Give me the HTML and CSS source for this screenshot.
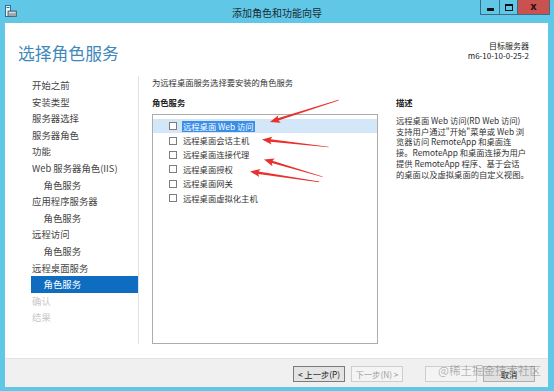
FILE: index.html
```html
<!DOCTYPE html>
<html lang="zh-CN">
<head>
<meta charset="utf-8">
<title>添加角色和功能向导</title>
<link rel="stylesheet" href="styles.css">
</head>
<body>
<div class="window">
  <div class="titlebar">
    <svg class="app-icon" width="12" height="12" viewBox="0 0 12 12">
      <rect x="0.5" y="0.5" width="5" height="11" fill="#e8f4fb" stroke="#2d6fa3"/>
      <rect x="1.5" y="2" width="3" height="1" fill="#2d6fa3"/>
      <rect x="3" y="6" width="8.5" height="5.5" fill="#9aa7b0" stroke="#4d5a63" stroke-width="0.8"/>
      <rect x="4" y="7.2" width="6.5" height="1" fill="#e3e8eb"/>
    </svg>
    <div class="title">添加角色和功能向导</div>
    <div class="controls">
      <div class="ctl ctl-min"><span class="min-bar"></span></div>
      <div class="ctl ctl-max"><span class="max-box"></span></div>
      <div class="ctl ctl-close">x</div>
    </div>
  </div>

  <div class="client">
    <div class="header">
      <h1 class="heading">选择角色服务</h1>
      <div class="target">
        <div class="target-label">目标服务器</div>
        <div class="target-name">m6-10-10-0-25-2</div>
      </div>
    </div>

    <div class="main">
      <nav class="nav">
        <div class="nav-item">开始之前</div>
        <div class="nav-item">安装类型</div>
        <div class="nav-item">服务器选择</div>
        <div class="nav-item">服务器角色</div>
        <div class="nav-item">功能</div>
        <div class="nav-item">Web 服务器角色(IIS)</div>
        <div class="nav-item sub">角色服务</div>
        <div class="nav-item">应用程序服务器</div>
        <div class="nav-item sub">角色服务</div>
        <div class="nav-item">远程访问</div>
        <div class="nav-item sub">角色服务</div>
        <div class="nav-item">远程桌面服务</div>
        <div class="nav-item sub active">角色服务</div>
        <div class="nav-item disabled">确认</div>
        <div class="nav-item disabled">结果</div>
      </nav>

      <section class="content">
        <p class="intro">为远程桌面服务选择要安装的角色服务</p>
        <div class="panes">
          <div class="left-pane">
            <div class="label">角色服务</div>
            <div class="listbox">
              <div class="row selected"><span class="cb"></span><span class="row-text hl">远程桌面 Web 访问</span></div>
              <div class="row"><span class="cb"></span><span class="row-text">远程桌面会话主机</span></div>
              <div class="row"><span class="cb"></span><span class="row-text">远程桌面连接代理</span></div>
              <div class="row"><span class="cb"></span><span class="row-text">远程桌面授权</span></div>
              <div class="row"><span class="cb"></span><span class="row-text">远程桌面网关</span></div>
              <div class="row"><span class="cb"></span><span class="row-text">远程桌面虚拟化主机</span></div>
            </div>
          </div>
          <div class="right-pane">
            <div class="label">描述</div>
            <p class="desc">远程桌面 Web 访问(RD Web 访问)<br>支持用户通过"开始"菜单或 Web 浏<br>览器访问 RemoteApp 和桌面连<br>接。RemoteApp 和桌面连接为用户<br>提供 RemoteApp 程序、基于会话<br>的桌面以及虚拟桌面的自定义视图。</p>
          </div>
        </div>
      </section>
    </div>

    <div class="footer">
      <button class="btn btn-focus">&lt; 上一步(P)</button>
      <button class="btn btn-disabled">下一步(N) &gt;</button>
      <button class="btn btn-disabled btn-install"></button>
      <button class="btn">取消</button>
    </div>
  </div>
</div>

<svg class="arrows" width="554" height="391" viewBox="0 0 554 391">
  <g fill="#e8302c">
    <polygon transform="translate(270 122) rotate(-17.7)" points="0,0 10,-4 8.5,-1.2 72,-0.3 72,0.3 8.5,1.2 10,4"/>
    <polygon transform="translate(262 139.5) rotate(6.4)" points="0,0 10,-4 8.5,-1.2 67,-0.3 67,0.3 8.5,1.2 10,4"/>
    <polygon transform="translate(264 159.5) rotate(16.5)" points="0,0 10,-4 8.5,-1.2 61,-0.3 61,0.3 8.5,1.2 10,4"/>
    <polygon transform="translate(250 171.5) rotate(8.5)" points="0,0 10,-4 8.5,-1.2 70,-0.3 70,0.3 8.5,1.2 10,4"/>
  </g>
</svg>
<div class="watermark">@稀土掘金技术社区</div>
</body>
</html>
```

FILE: styles.css
```css
* { box-sizing: border-box; margin: 0; padding: 0; }
html, body { width: 554px; height: 391px; overflow: hidden; }
body {
  background: #60c7e7;
  font-family: "Noto Sans CJK SC", "Noto Sans", sans-serif;
  color: #3a3a3a;
  position: relative;
}
.window { display: flex; flex-direction: column; height: 391px; }

/* title bar */
.titlebar {
  height: 23px;
  display: grid;
  grid-template-columns: 1fr auto 1fr;
  align-items: start;
}
.app-icon { margin: 5px 0 0 5px; }
.title { font-size: 10px; line-height: 13px; padding-top: 6px; color: #1b2a33; }
.controls { justify-self: end; display: flex; margin-right: 4px; }
.ctl {
  height: 15px;
  border: 1px solid #3b6e86;
  border-top: none;
  display: flex; align-items: center; justify-content: center;
}
.ctl-min { width: 19px; background: #60c7e7; border-right: none; }
.ctl-max { width: 19px; background: #60c7e7; }
.ctl-close {
  width: 32px; background: #c9514f; border-left: none;
  font-family: "DejaVu Sans", sans-serif; font-weight: bold; font-size: 10px; line-height: 10px; color: #2a1212;
}
.min-bar { width: 7px; height: 3px; background: #111; margin-top: 5px; }
.max-box { width: 8px; height: 7px; border: 1px solid #111; border-top-width: 2px; }

/* client */
.client {
  flex: 1;
  margin: 0 6px 4px 5px;
  background: #fff;
  display: flex;
  flex-direction: column;
}
.header {
  height: 53px;
  display: flex;
  justify-content: space-between;
  align-items: flex-start;
  padding: 19px 19px 0 13px;
}
.heading {
  font-weight: normal;
  font-size: 16.8px;
  line-height: 22px;
  color: #3f88bb;
}
.target { text-align: right; font-size: 8px; line-height: 9.5px; color: #222; margin-top: -1px; }

.main { flex: 1; display: flex; padding-bottom: 14px; }
.nav {
  width: 134px;
  border-right: 1px solid #e2e2e2;
  padding: 1px 0 0 26px;
  font-size: 9.4px;
}
.nav-item { line-height: 16.6px; height: 16.6px; padding-left: 1px; color: #444; white-space: nowrap; }
.nav-item.sub { padding-left: 12.5px; }
.nav-item.active { background: #0e6dc0; color: #fff; }
.nav-item.disabled { color: #c8c8c8; }

.content { flex: 1; padding-left: 13px; font-size: 8.3px; }
.intro { line-height: 12px; color: #333; }
.panes { display: flex; margin-top: 8px; }
.left-pane { width: 226px; }
.right-pane { margin-left: 18px; width: 136px; }
.label { font-weight: bold; line-height: 12px; color: #222; }
.listbox {
  margin-top: 6px;
  height: 230px;
  border: 1px solid #acacac;
  padding-top: 4px;
}
.row { height: 14.4px; display: flex; align-items: center; padding-left: 16px; color: #333; }
.row.selected { background: #d3e7f9; }
.cb { width: 8px; height: 8px; border: 1px solid #7d7d7d; background: #fff; margin-right: 6px; }
.row-text { line-height: 11px; white-space: nowrap; }
.row-text.hl { background: #3a8ee6; color: #fff; padding: 0 1px; margin-left: -1px; }

.desc { margin-top: 7px; line-height: 10.7px; color: #333; white-space: nowrap; }

/* footer */
.footer {
  height: 29px;
  background: #f0f0f0;
  border-top: 1px solid #e4e4e4;
  display: flex;
  justify-content: flex-end;
  padding: 7px 13px 0 0;
  gap: 6px;
}
.btn {
  width: 52px;
  height: 16px;
  font-family: inherit;
  font-size: 8.3px;
  line-height: 14px;
  border: 1px solid #adadad;
  background: #e1e1e1;
  color: #222;
}
.btn-focus { border-color: #7a7a7a; background: #e4e4e4; }
.btn-disabled { background: #f4f4f4; border-color: #cdcdcd; color: #a0a0a0; }
.btn-install { margin-left: 16px; }

/* overlays */
.arrows { position: absolute; left: 0; top: 0; pointer-events: none; }
.watermark {
  position: absolute;
  left: 438px;
  top: 362px;
  font-size: 11.5px;
  line-height: 16px;
  color: rgba(95, 95, 95, 0.45);
  white-space: nowrap;
}
```
